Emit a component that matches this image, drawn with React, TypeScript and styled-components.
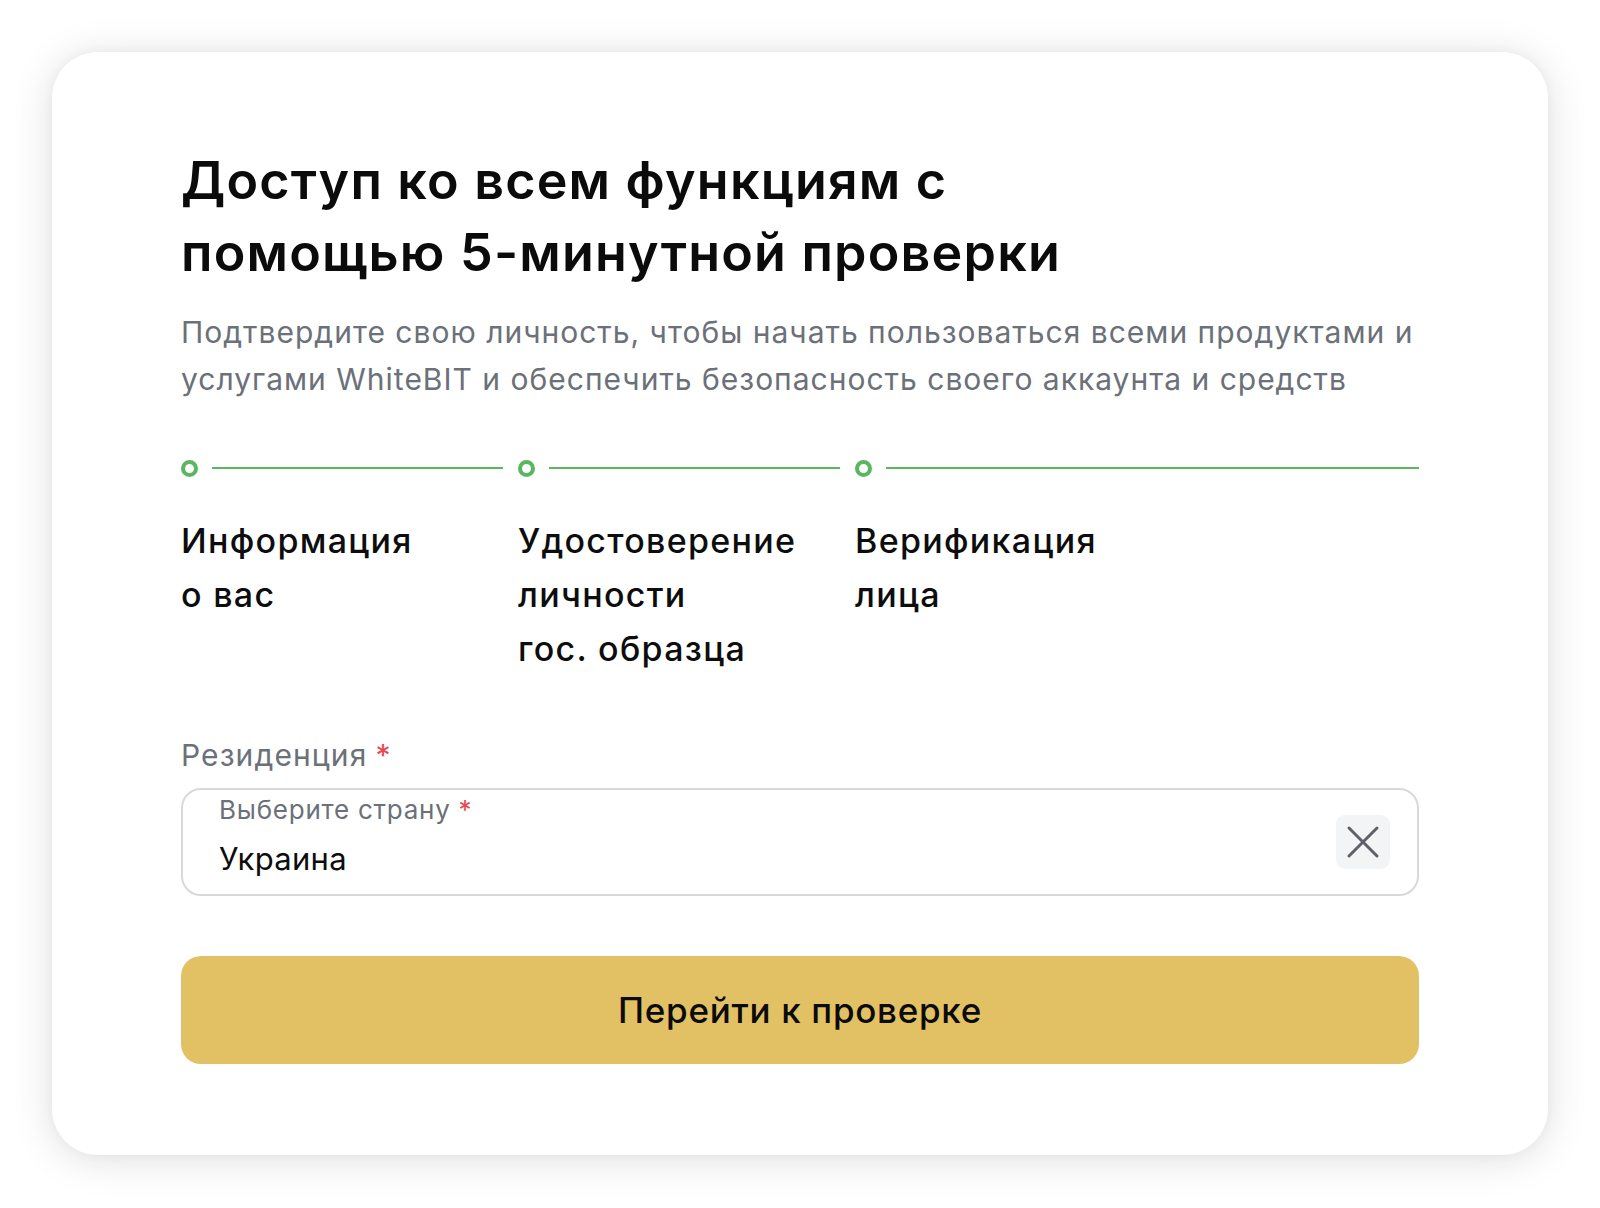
import React from "react";
import styled, { createGlobalStyle } from "styled-components";

const Global = createGlobalStyle`
  html, body { margin: 0; padding: 0; background: #ffffff; }
  body { font-family: Inter, "Noto Sans", sans-serif; -webkit-font-smoothing: antialiased; }
  * { box-sizing: border-box; }
`;

const Page = styled.div`
  width: 1600px;
  height: 1208px;
  padding: 52px 52px 0 52px;
`;

const Card = styled.div`
  width: 1496px;
  height: 1103px;
  background: #ffffff;
  border-radius: 46px;
  box-shadow: 0 4px 40px rgba(0, 0, 0, 0.13), 0 0 12px rgba(0, 0, 0, 0.04);
  padding: 93px 129px 0 129px;
  display: flex;
  flex-direction: column;
`;

const Title = styled.h1`
  margin: 0;
  font-size: 52px;
  line-height: 72px;
  font-weight: 600;
  color: #0b0b0c;
  letter-spacing: 1.2px;
`;

const Subtitle = styled.p`
  margin: 20px 0 0 0;
  font-size: 30px;
  line-height: 47px;
  font-weight: 400;
  color: #6b7079;
  letter-spacing: 1px;
`;

const Steps = styled.div`
  display: flex;
  margin-top: 56px;
`;

const Step = styled.div<{ $last?: boolean }>`
  width: ${(p) => (p.$last ? "auto" : "337px")};
  flex: ${(p) => (p.$last ? "1" : "none")};
  display: flex;
  flex-direction: column;
`;

const Track = styled.div<{ $last?: boolean }>`
  display: flex;
  align-items: center;
  gap: 14px;
  padding-right: ${(p) => (p.$last ? "0" : "15px")};
  height: 18px;
`;

const Dot = styled.span`
  width: 17px;
  height: 17px;
  border-radius: 50%;
  border: 4px solid #5cb65f;
  flex: none;
`;

const Line = styled.span`
  flex: 1;
  height: 2.5px;
  background: #5cb65f;
`;

const StepLabel = styled.div`
  margin-top: 37px;
  font-size: 34px;
  line-height: 54px;
  font-weight: 500;
  color: #0d0d0e;
  letter-spacing: 1.3px;
`;

const FieldLabel = styled.div`
  margin-top: 59px;
  font-size: 30px;
  line-height: 40px;
  color: #6b7079;
  letter-spacing: 1.1px;
`;

const Star = styled.span`
  color: #e5484d;
  margin-left: 8px;
`;

const Input = styled.div`
  margin-top: 13px;
  height: 108px;
  border: 2px solid #d7d9dd;
  border-radius: 20px;
  padding: 0 27px 0 36px;
  display: flex;
  align-items: center;
`;

const InputText = styled.div`
  flex: 1;
  display: flex;
  flex-direction: column;
  align-self: flex-start;
  padding-top: 2px;
`;

const InnerLabel = styled.div`
  font-size: 26px;
  line-height: 36px;
  color: #6b7079;
  letter-spacing: 0.75px;
`;

const Value = styled.div`
  margin-top: 11px;
  font-size: 31px;
  line-height: 40px;
  color: #0d0d0e;
  letter-spacing: 0.3px;
`;

const ClearButton = styled.button`
  width: 54px;
  height: 54px;
  border: none;
  border-radius: 9px;
  background: #f3f4f6;
  display: flex;
  align-items: center;
  justify-content: center;
  padding: 0;
  cursor: pointer;
`;

const Submit = styled.button`
  margin-top: 60px;
  height: 108px;
  border: none;
  border-radius: 20px;
  background: #e2c064;
  font-family: Inter, "Noto Sans", sans-serif;
  font-size: 35px;
  font-weight: 500;
  color: #0b0b0c;
  letter-spacing: 0.7px;
  cursor: pointer;
`;

const steps = [
  ["Информация", "о вас"],
  ["Удостоверение", "личности", "гос. образца"],
  ["Верификация", "лица"],
];

export default function App() {
  return (
    <>
      <Global />
      <Page>
        <Card>
          <Title>
            Доступ ко всем функциям с<br />
            помощью 5-минутной проверки
          </Title>
          <Subtitle>
            Подтвердите свою личность, чтобы начать пользоваться всеми продуктами и
            <br />
            услугами WhiteBIT и обеспечить безопасность своего аккаунта и средств
          </Subtitle>
          <Steps>
            {steps.map((lines, i) => {
              const last = i === steps.length - 1;
              return (
                <Step key={i} $last={last}>
                  <Track $last={last}>
                    <Dot />
                    <Line />
                  </Track>
                  <StepLabel>
                    {lines.map((l, j) => (
                      <div key={j}>{l}</div>
                    ))}
                  </StepLabel>
                </Step>
              );
            })}
          </Steps>
          <FieldLabel>
            Резиденция<Star>*</Star>
          </FieldLabel>
          <Input>
            <InputText>
              <InnerLabel>
                Выберите страну<Star>*</Star>
              </InnerLabel>
              <Value>Украина</Value>
            </InputText>
            <ClearButton aria-label="clear">
              <svg width="34" height="34" viewBox="0 0 34 34" fill="none">
                <path d="M3 3L31 31M31 3L3 31" stroke="#5d6067" strokeWidth="3" strokeLinecap="round" />
              </svg>
            </ClearButton>
          </Input>
          <Submit>Перейти к проверке</Submit>
        </Card>
      </Page>
    </>
  );
}
